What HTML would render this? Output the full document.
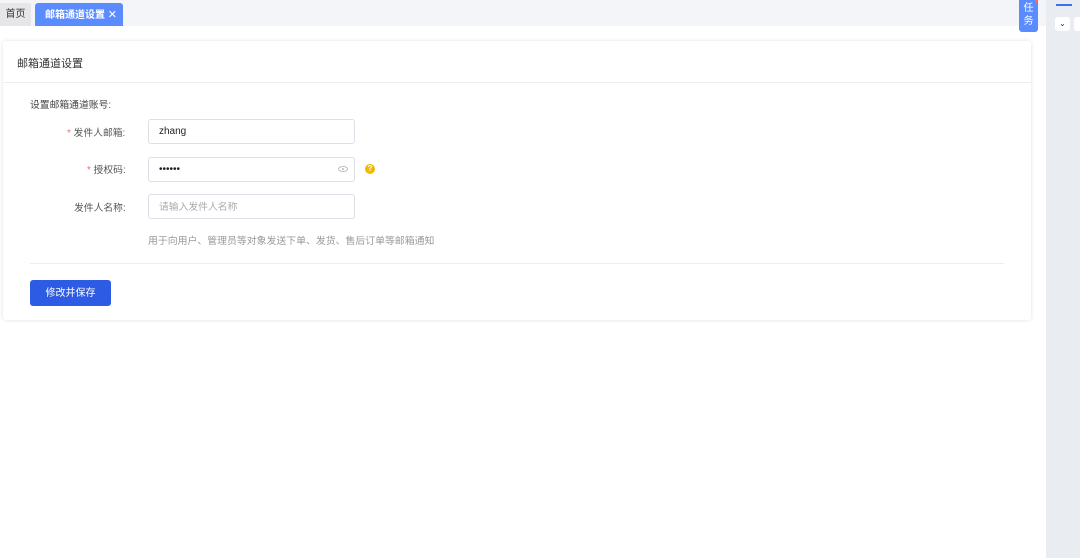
<!DOCTYPE html>
<html><head><meta charset="utf-8"><style>
*{margin:0;padding:0;box-sizing:border-box}
body{width:1080px;height:558px;background:#fff;font-family:"Liberation Sans","Noto Sans CJK SC",sans-serif;position:relative;overflow:hidden;font-size:10px;color:#333}
.abs{position:absolute}
</style></head><body>
<div class="abs" style="left:0;top:0;width:1046px;height:26px;background:#f4f5f9"></div>
<div class="abs" style="left:0;top:26px;width:1046px;height:532px;background:#fff"></div>
<div class="abs" style="left:0;top:3px;width:31px;height:23px;background:#e6e6e8;font-size:10px;line-height:24px;text-align:center;color:#333">首页</div>
<div class="abs" style="left:35px;top:3px;width:88px;height:23px;background:#5b8cff;border-radius:3px 3px 0 0;color:#fff;font-size:10px;line-height:24px;padding-left:10px;font-weight:bold">邮箱通道设置 <span style="font-weight:normal;font-size:11px">✕</span></div>
<div class="abs" style="left:1019px;top:0;width:19px;height:32px;background:#5b8cff;border-radius:0 0 3px 3px;color:#fff;font-size:10px;line-height:13px;text-align:center;padding-top:2px">任<br>务</div>
<div class="abs" style="left:1035px;top:0;width:3px;height:3px;background:#f66;border-radius:50%"></div>
<div class="abs" style="left:1046px;top:0;width:34px;height:558px;background:#e9ecf1"></div>
<div class="abs" style="left:1056px;top:4px;width:16px;height:2px;background:#3a6ff0"></div>
<div class="abs" style="left:1055px;top:17px;width:15px;height:14px;background:#fff;border-radius:3px;font-size:8px;text-align:center;line-height:14px">⌄</div>
<div class="abs" style="left:1074px;top:17px;width:8px;height:14px;background:#fff;border-radius:3px"></div>

<div class="abs" style="left:3px;top:41px;width:1028px;height:279px;background:#fff;border-radius:3px;box-shadow:0 0 4px rgba(0,0,0,.12)"></div>
<div class="abs" style="left:17px;top:55px;font-size:11px;color:#333">邮箱通道设置</div>
<div class="abs" style="left:3px;top:82px;width:1028px;height:1px;background:#eceef2"></div>
<div class="abs" style="left:30px;top:97px;font-size:9.8px;color:#444">设置邮箱通道账号:</div>

<div class="abs" style="left:67px;top:125px;font-size:9.8px;color:#555"><span style="color:#f56c6c">*</span> 发件人邮箱:</div>
<div class="abs" style="left:148px;top:119px;width:207px;height:25px;border:1px solid #dcdfe6;border-radius:3px;font-size:10px;line-height:24px;padding-left:10px;color:#222">zhang</div>

<div class="abs" style="left:87px;top:162px;font-size:9.8px;color:#555"><span style="color:#f56c6c">*</span> 授权码:</div>
<div class="abs" style="left:148px;top:157px;width:207px;height:25px;border:1px solid #dcdfe6;border-radius:3px;font-size:10px;line-height:23px;padding-left:10px;color:#222">••••••</div>
<div class="abs" style="left:338px;top:166px;width:10px;height:6px;border:1px solid #bbb;border-radius:50%"></div>
<div class="abs" style="left:342px;top:168px;width:2px;height:2px;background:#bbb;border-radius:50%"></div>
<div class="abs" style="left:365px;top:164px;width:10px;height:10px;background:#f5b800;border-radius:50%;color:#fff;font-size:8px;line-height:10px;text-align:center;font-weight:bold">?</div>

<div class="abs" style="left:74px;top:200px;font-size:9.8px;color:#555">发件人名称:</div>
<div class="abs" style="left:148px;top:194px;width:207px;height:25px;border:1px solid #dcdfe6;border-radius:3px;font-size:9.8px;line-height:25px;padding-left:10px;color:#aaa">请输入发件人名称</div>
<div class="abs" style="left:148px;top:233px;font-size:9.9px;color:#999">用于向用户、管理员等对象发送下单、发货、售后订单等邮箱通知</div>
<div class="abs" style="left:30px;top:263px;width:974px;height:1px;background:#eceef2"></div>
<div class="abs" style="left:30px;top:280px;width:81px;height:26px;background:#2d5be3;border-radius:3px;color:#fff;font-size:10px;line-height:27px;text-align:center">修改并保存</div>
</body></html>
